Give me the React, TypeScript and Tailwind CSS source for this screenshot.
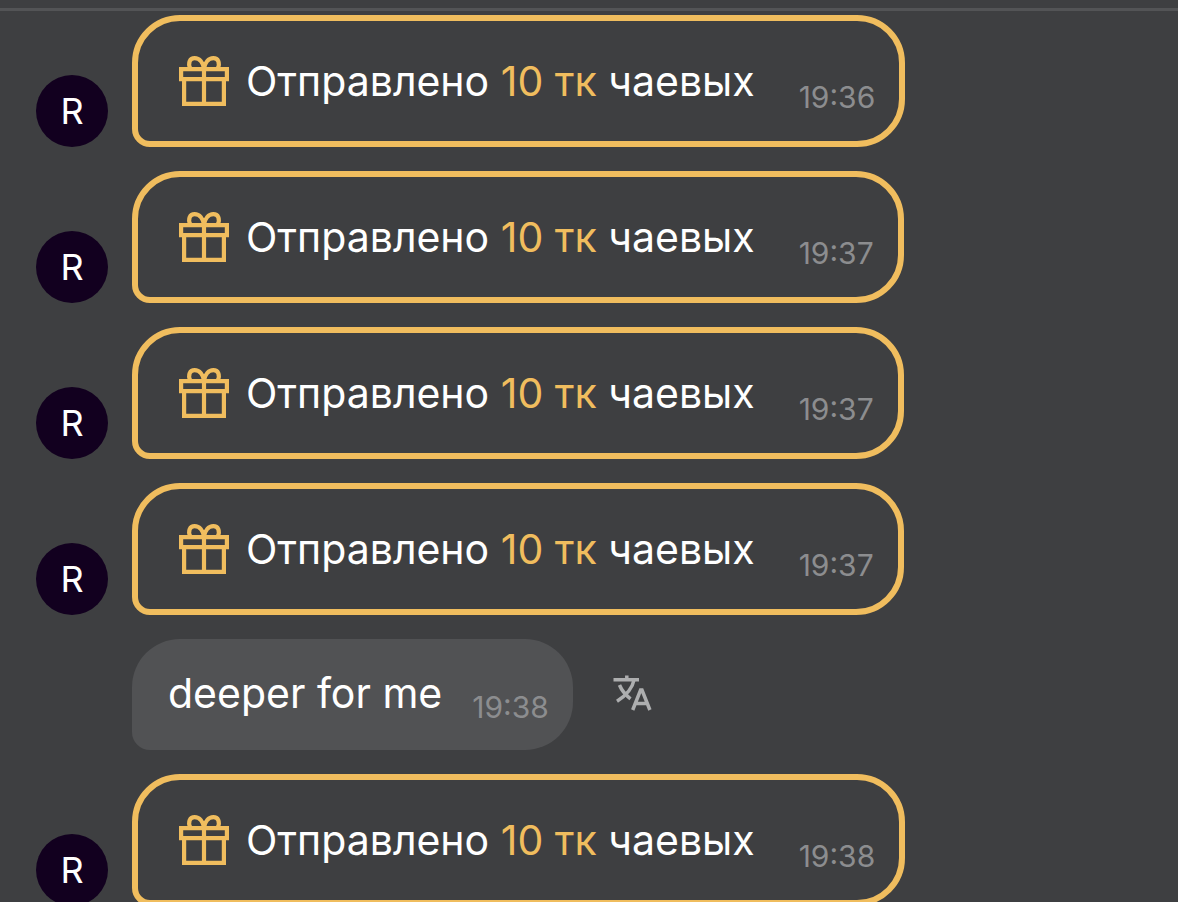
type TipMessage = { kind: "tip"; user: string; amount: string; time: string };
type TextMessage = { kind: "text"; text: string; time: string };
type Message = TipMessage | TextMessage;

const messages: Message[] = [
  { kind: "tip", user: "R", amount: "10 тк", time: "19:36" },
  { kind: "tip", user: "R", amount: "10 тк", time: "19:37" },
  { kind: "tip", user: "R", amount: "10 тк", time: "19:37" },
  { kind: "tip", user: "R", amount: "10 тк", time: "19:37" },
  { kind: "text", text: "deeper for me", time: "19:38" },
  { kind: "tip", user: "R", amount: "10 тк", time: "19:38" },
];

function GiftIcon() {
  return (
    <svg
      viewBox="0 0 50 50"
      fill="none"
      stroke="currentColor"
      strokeWidth="4.2"
      className="size-[50px] shrink-0"
      aria-hidden="true"
    >
      <path d="M2.1 13.1H47.9V23.1H2.1Z" />
      <path d="M5.1 23.1V47.9H44.9V23.1" />
      <path d="M25 12V48" />
      <path d="M11.3 12.5C8.6 6.5 11 2.1 15.6 2.1C20.6 2.1 24 6.5 25 12.5C26 6.5 29.4 2.1 34.4 2.1C39 2.1 41.4 6.5 38.7 12.5" />
    </svg>
  );
}

function TranslateIcon() {
  return (
    <svg
      viewBox="0 0 40 36"
      fill="none"
      stroke="currentColor"
      strokeWidth="3.5"
      className="h-9 w-10"
      aria-hidden="true"
    >
      <path d="M0.5 4.8H26M13.8 0.5V4.8" />
      <path d="M21 5C19.5 13 13 20.5 4 26.3" />
      <path d="M6.5 10C8.5 15 12 19.5 17.5 23.8" />
      <path d="M19.7 35L27.6 15H29L36.9 35M22.5 28.6H34" />
    </svg>
  );
}

function Time({ value }: { value: string }) {
  return <time className="text-[30px] leading-9 text-[#8c8d8f]">{value}</time>;
}

function Tip({ message }: { message: TipMessage }) {
  return (
    <li className="flex items-end gap-6">
      <span className="flex size-[72px] shrink-0 items-center justify-center rounded-full bg-[#12001f] text-[36px] leading-none">
        {message.user}
      </span>
      <div className="flex h-[132px] items-center rounded-[48px] rounded-bl-[18px] border-6 border-[#f0bd5e] pr-6 pl-[41px]">
        <span className="text-[#f0bd5e]">
          <GiftIcon />
        </span>
        <p className="ml-[17px] text-[41px] leading-[60px]">
          Отправлено <span className="text-[#f0bd5e]">{message.amount}</span>{" "}
          чаевых
        </p>
        <span className="mt-8 ml-11 flex">
          <Time value={message.time} />
        </span>
      </div>
    </li>
  );
}

function Text({ message }: { message: TextMessage }) {
  return (
    <li className="ml-24 flex items-center gap-10">
      <div className="flex h-[111px] items-center rounded-[48px] rounded-bl-[18px] bg-[#515254] pr-6 pl-9">
        <p className="pb-1 text-[41px] leading-[60px]">{message.text}</p>
        <span className="mt-6 ml-[30px] flex">
          <Time value={message.time} />
        </span>
      </div>
      <button
        type="button"
        aria-label="Перевести"
        className="pb-1 text-[#adaeaf]"
      >
        <TranslateIcon />
      </button>
    </li>
  );
}

export default function App() {
  return (
    <main className="h-screen overflow-hidden bg-[#3e3f41] pt-2 font-['Inter',sans-serif] text-white">
      <hr className="border-t-3 border-[#535456]" />
      <ul className="mt-1 flex flex-col gap-6 px-9">
        {messages.map((message, i) =>
          message.kind === "tip" ? (
            <Tip key={i} message={message} />
          ) : (
            <Text key={i} message={message} />
          ),
        )}
      </ul>
    </main>
  );
}
